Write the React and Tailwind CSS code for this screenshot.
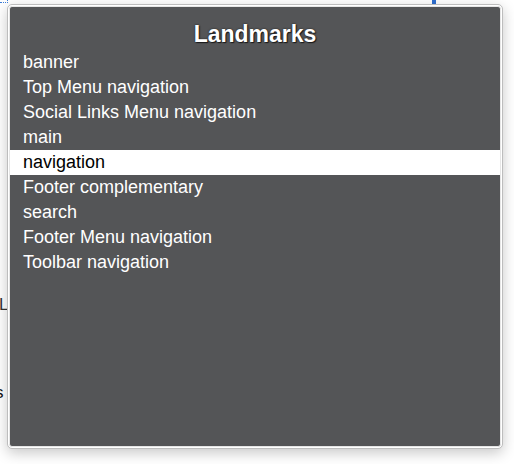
export default function App() {
  const items = [
    "banner",
    "Top Menu navigation",
    "Social Links Menu navigation",
    "main",
    "navigation",
    "Footer complementary",
    "search",
    "Footer Menu navigation",
    "Toolbar navigation",
  ];
  return (
    <div className="relative w-[514px] h-[464px] bg-white overflow-hidden" style={{ fontFamily: '"Liberation Sans", Arial, sans-serif' }}>
      <div className="absolute left-0 top-0 w-[8px] h-[3px] border-b border-r border-dotted border-[#3b7dd8]" />
      <div className="absolute left-[432px] top-0 w-[4px] h-[4px] bg-[#2f6fd0]" />
      <div className="absolute left-[-1px] top-[292px] text-[17px] text-[#333]">L</div>
      <div className="absolute left-[-5px] top-[380px] text-[17px] text-[#111]">s</div>
      <div className="absolute left-[7px] top-[4px] w-[496px] h-[445px] rounded-[5px] border border-[#bdbdbd] bg-white p-[1px] shadow-[0_4px_14px_rgba(0,0,0,0.22)]">
        <div className="w-full h-full rounded-[3px] border border-[#e6e6e6] bg-[#545557] flex flex-col">
          <div className="mt-[13px] mb-[2px] text-center text-[23px] leading-[28px] font-bold text-white [text-shadow:0_0_2px_#1a1a1a,1px_1px_1px_#1a1a1a]">
            Landmarks
          </div>
          <div className="flex flex-col">
            {items.map((t, i) => (
              <div
                key={i}
                className={
                  i === 4
                    ? "h-[25px] leading-[25px] pl-[13px] text-[18px] bg-white text-black"
                    : "h-[25px] leading-[25px] pl-[13px] text-[18px] text-white"
                }
              >
                {t}
              </div>
            ))}
          </div>
        </div>
      </div>
    </div>
  );
}
